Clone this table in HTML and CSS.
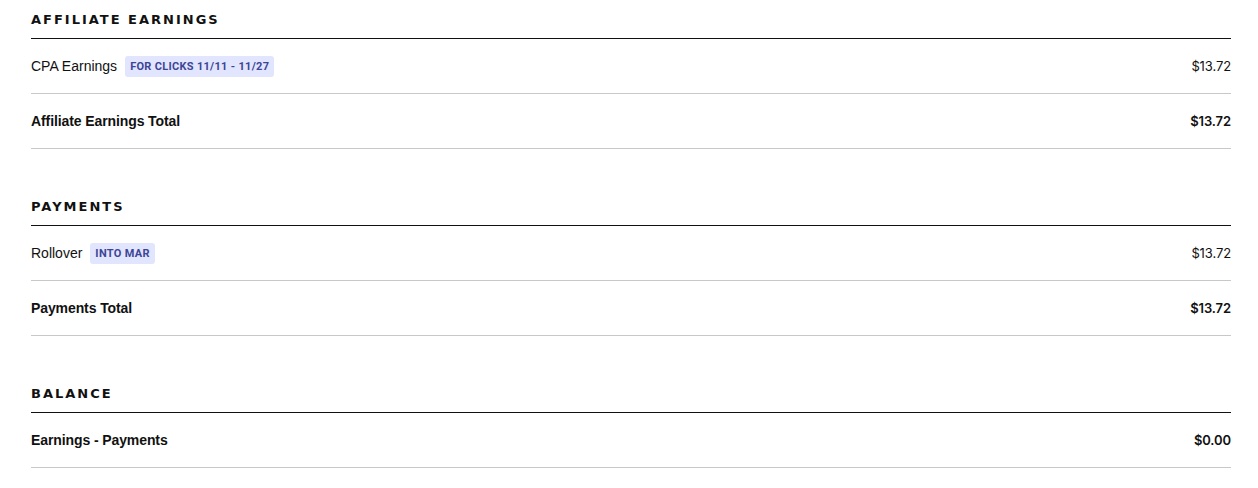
FILE: index.html
```html
<!DOCTYPE html>
<html>
<head>
<meta charset="utf-8">
<link rel="stylesheet" href="styles.css">
</head>
<body>
<div class="page">
  <section class="section">
    <h2 class="heading">Affiliate Earnings</h2>
    <div class="row">
      <div class="label">CPA Earnings <span class="badge">For clicks 11/11 - 11/27</span></div>
      <div class="amount">$13.72</div>
    </div>
    <div class="row total">
      <div class="label">Affiliate Earnings Total</div>
      <div class="amount">$13.72</div>
    </div>
  </section>
  <section class="section">
    <h2 class="heading">Payments</h2>
    <div class="row">
      <div class="label">Rollover <span class="badge">Into Mar</span></div>
      <div class="amount">$13.72</div>
    </div>
    <div class="row total">
      <div class="label">Payments Total</div>
      <div class="amount">$13.72</div>
    </div>
  </section>
  <section class="section">
    <h2 class="heading">Balance</h2>
    <div class="row total">
      <div class="label">Earnings - Payments</div>
      <div class="amount">$0.00</div>
    </div>
  </section>
</div>
</body>
</html>
```
FILE: styles.css
```css
html, body {
  margin: 0;
  padding: 0;
  background: #ffffff;
}
body {
  font-family: "Liberation Sans", Arial, sans-serif;
  color: #111111;
}
.page {
  padding: 0 27px 0 31px;
  display: flex;
  flex-direction: column;
  gap: 38px;
}
.section {
  display: flex;
  flex-direction: column;
}
.heading {
  margin: 0;
  height: 38px;
  display: flex;
  align-items: center;
  border-bottom: 1px solid #111111;
  font-family: "DejaVu Sans", sans-serif;
  font-weight: bold;
  font-size: 13px;
  letter-spacing: 2px;
  text-transform: uppercase;
  color: #111111;
}
.row {
  height: 54px;
  display: flex;
  align-items: center;
  justify-content: space-between;
  border-bottom: 1px solid #c8c8c8;
  font-size: 14px;
}
.label {
  display: flex;
  align-items: center;
  gap: 8px;
}
.total .label {
  font-weight: bold;
  letter-spacing: -0.1px;
}
.badge {
  display: inline-block;
  background: #e1e5fd;
  color: #3d4596;
  font-family: Roboto, "Liberation Sans", sans-serif;
  font-weight: bold;
  font-size: 11px;
  letter-spacing: 0.3px;
  text-transform: uppercase;
  padding: 4px 5px 4px;
  border-radius: 3px;
  line-height: 13px;
}
.amount {
  text-align: right;
  font-family: Inter, "Liberation Sans", sans-serif;
  font-size: 13px;
  letter-spacing: -0.1px;
  font-variant-numeric: proportional-nums;
}
.total .amount {
  font-weight: 600;
}
```
